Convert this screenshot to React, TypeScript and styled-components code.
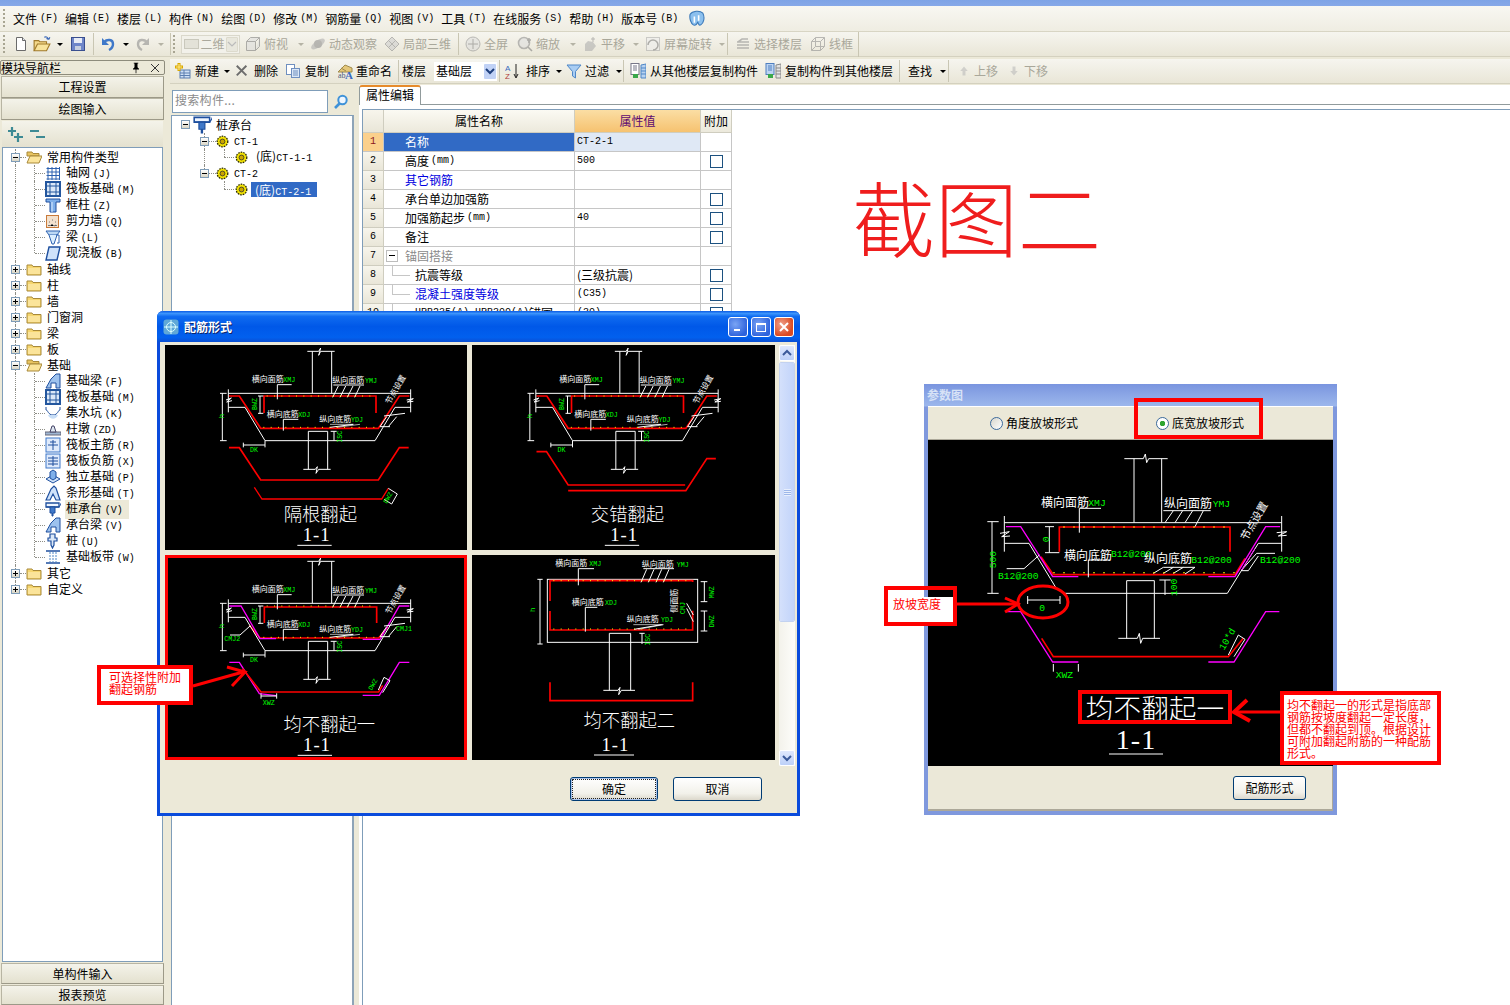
import React from 'react';
import styled, { createGlobalStyle, css } from 'styled-components';

const CJK = `"Noto Sans CJK SC", "Liberation Sans", sans-serif`;
const MONO = `"Liberation Mono", "Noto Sans CJK SC", monospace`;
const SERIF = `"Liberation Serif", "Noto Sans CJK SC", serif`;

const Global = createGlobalStyle`
  html, body { margin: 0; padding: 0; background: #fff; }
  body { font-family: ${CJK}; font-size: 12px; color: #000; }
  * { box-sizing: border-box; }
`;

const Page = styled.div`
  position: relative; width: 1510px; height: 1005px; overflow: hidden; background: #ece9d8;
  display: flex; flex-direction: column; line-height: 16px;
`;
const TitleStrip = styled.div`height: 6px; background: linear-gradient(#7ea3e6, #86a8e8); flex: none;`;
const MenuBar = styled.div`
  height: 25px; flex: none; display: flex; align-items: center; gap: 7px; padding-left: 13px; position: relative;
  background: linear-gradient(#f8f7f2, #efede2);
`;
const Grip = styled.span`
  width: 2px; height: 19px; flex: none;
  background: repeating-linear-gradient(#a8a592 0 2px, transparent 2px 4px);
`;
const MenuGrip = styled(Grip)`position: absolute; left: 3px; top: 3px;`;
const MenuItem = styled.span`display: inline-flex; align-items: center; white-space: nowrap;`;
const LogoItem = styled.span`display: inline-flex; margin-left: 3px;`;
const Lat = styled.span<{ $gap?: number }>`
  font-family: ${MONO}; font-size: 10px; margin-left: ${p => p.$gap ?? 0}px;
`;
const Toolbar1 = styled.div`
  height: 26px; flex: none; display: flex; align-items: center; padding-left: 3px; background: linear-gradient(#f6f5ef, #e9e6d7);
  border-top: 1px solid #d8d5c4; border-bottom: 1px solid #d4d1bf;
`;
const Gap = styled.span<{ $w: number }>`width: ${p => p.$w}px; flex: none;`;
const Body = styled.div`flex: 1; display: flex; min-height: 0;`;
const Sidebar = styled.div`width: 165px; padding-top: 3px; display: flex; flex-direction: column; flex: none;`;
const NavHeader = styled.div`
  height: 15px; flex: none; display: flex; align-items: center; border: 1px solid #8e8c7c; border-radius: 2px; font-size: 12px;
  padding-right: 4px; overflow: hidden; background: #ece9d8;
`;
const NavTitle = styled.span`flex: 1; white-space: nowrap;`;
const NavBtn = styled.div<{ $mt?: number; $h?: number }>`
  height: ${p => p.$h ?? 22}px; flex: none; margin: ${p => p.$mt ?? 0}px 1px 0; display: flex; align-items: center; justify-content: center;
  background: linear-gradient(#f4f3ea, #e4e1cf); border: 1px solid #b8b5a3; border-right-color: #9c9988; border-bottom-color: #9c9988;
`;
const ExpandBar = styled.div`
  height: 26px; flex: none; margin: 1px 2px 0; display: flex; align-items: center; gap: 6px; padding-left: 5px;
  background: linear-gradient(#f4f3ea, #e4e1cf);
`;
const TreeBox = styled.div`
  flex: 1; margin: 0 2px 1px; padding-top: 1px; background: #fff; border: 1px solid #7f9db9; overflow: hidden; min-height: 0;
`;
const Row = styled.div<{ $pad: number; $rowH?: number }>`
  position: relative; height: ${p => p.$rowH ?? 16}px; display: flex; align-items: center; padding-left: ${p => p.$pad}px; white-space: nowrap;
`;
const VGuide = styled.i<{ $x: number; $h?: number }>`
  position: absolute; left: ${p => p.$x}px; top: 0; height: ${p => p.$h ?? 16}px; width: 0; border-left: 1px dotted #8e8e86;
`;
const HGuide = styled.i<{ $x: number; $w: number }>`
  position: absolute; left: ${p => p.$x}px; top: 8px; width: ${p => p.$w}px; height: 0; border-top: 1px dotted #8e8e86;
`;
const Exp = styled.span<{ $open?: boolean; $mr: number }>`
  position: relative; z-index: 1; width: 9px; height: 9px; flex: none; margin-right: ${p => p.$mr}px;
  border: 1px solid #7f9db9; background: linear-gradient(#fff, #d9d5c4);
  &::before { content: ''; position: absolute; left: 1px; top: 3px; width: 5px; height: 1px; background: #000; }
  ${p => !p.$open && css`&::after { content: ''; position: absolute; left: 3px; top: 1px; width: 1px; height: 5px; background: #000; }`}
`;
const Label = styled.span<{ $ml: number; $sel?: boolean; $hi?: boolean }>`
  margin-left: ${p => p.$ml}px;
  ${p => p.$sel && css`background: #316ac5; color: #fff; padding: 0 6px 0 4px; height: 15px; line-height: 15px;`}
  ${p => p.$hi && css`background: #ece9d8; padding: 0 6px 0 1px;`}
`;
const Main = styled.div`flex: 1; display: flex; flex-direction: column; margin-left: 5px; min-width: 0;`;
const Toolbar2 = styled.div`
  height: 25px; flex: none; margin-top: 2px; display: flex; align-items: center; padding-left: 5px;
  background: linear-gradient(#f6f5ef, #e9e6d7); border-bottom: 1px solid #d4d1bf;
`;
const ToolItem = styled.div<{ $w: number; $off?: boolean; $gap?: number }>`
  width: ${p => p.$w}px; flex: none; display: flex; align-items: center; gap: ${p => p.$gap ?? 3}px; white-space: nowrap;
  color: ${p => (p.$off ? '#a9a79a' : '#000')};
  svg { flex: none; ${p => p.$off && 'filter: grayscale(1); opacity: .55;'} }
`;
const Sep = styled.span<{ $w: number; $at?: number }>`
  width: ${p => p.$w}px; height: 22px; flex: none; position: relative;
  &::before { content: ''; position: absolute; left: ${p => p.$at ?? 0}px; top: 0; bottom: 0; width: 1px; background: #c9c6b3; }
`;
const Caret = styled.span<{ $w: number; $off?: boolean }>`
  width: ${p => p.$w}px; flex: none; display: flex; padding-left: 1px;
  &::before { content: ''; border: 3px solid transparent; border-top: 3px solid ${p => (p.$off ? '#b5b3a5' : '#000')}; border-bottom: 0; }
`;
const GroupEnd = styled.span`width: 1px; height: 25px; background: #c9c6b3; flex: none;`;
const Combo = styled.div<{ $w: number; $off?: boolean; $mr: number }>`
  width: ${p => p.$w}px; height: 19px; margin-right: ${p => p.$mr}px; flex: none; display: flex; align-items: center; justify-content: space-between;
  padding: 0 1px 0 2px; background: #fff; font-size: 12px; color: ${p => (p.$off ? '#aaa89c' : '#000')};
  ${p => p.$off && 'border: 1px solid #dad8cb; background: #f2f1ea;'}
`;
const ComboSwatch = styled.span`width: 15px; height: 10px; background: #e3e2d8; border: 1px solid #c9c8bc;`;
const ComboArrow = styled.span<{ $off?: boolean }>`
  width: 12px; height: 15px; background: ${p => (p.$off ? '#e8e7dd' : '#c1d2f6')}; display: flex; align-items: center; justify-content: center; border-radius: 1px;
  ${p => p.$off && 'border: 1px solid #dcdacc;'}
`;
const Content = styled.div`flex: 1; display: flex; min-height: 0;`;
const LeftPane = styled.div`width: 184px; display: flex; flex-direction: column; flex: none;`;
const SearchRow = styled.div`height: 31px; flex: none; padding: 6px 0 2px 2px; display: flex;`;
const SearchInput = styled.div`
  width: 156px; height: 23px; background: #fff; border: 1px solid #7f9db9; color: #8b8b8b; padding-left: 2px; line-height: 17px; letter-spacing: 0.3px;
`;
const SearchBtn = styled.div`width: 26px; display: flex; align-items: center; justify-content: center;`;
const CompTree = styled.div`flex: 1; margin-left: 1px; background: #fff; border: 1px solid #7f9db9; border-bottom: 0; border-right: 2px solid #8ea4b8;`;
const RightPane = styled.div`flex: 1; margin-left: 5px; display: flex; flex-direction: column; min-width: 0; background: #ece9d8;`;
const TabRow = styled.div`height: 20px; flex: none; margin-top: 1px; display: flex; align-items: flex-end; background: #fff;`;
const Tab = styled.div`
  width: 62px; height: 20px; background: #fff; border: 1px solid #919b9c; border-top: 2px solid #e68b2c; border-bottom: 0; border-radius: 3px 3px 0 0; padding-left: 6px; line-height: 16px;
`;
const TabRule = styled.div`flex: 1; height: 1px; background: #919b9c;`;
const Pane = styled.div`flex: 1; background: #fff; padding: 4px 0 0 3px; min-height: 0;`;
const GridBox = styled.div`height: 100%; border: 1px solid #7f9db9; border-right: 0; border-bottom: 0; overflow: hidden;`;
const PropGrid = styled.div`
  display: grid; width: 369px; grid-template-columns: 21px 191px 126px 31px; grid-template-rows: 23px repeat(10, 19px);
`;
const Cell = styled.div<{ $k?: string }>`
  display: flex; align-items: center; border-right: 1px solid #c6c6c6; border-bottom: 1px solid #c6c6c6; padding-left: 2px; white-space: nowrap; position: relative; overflow: hidden;
  ${p => p.$k === 'num' && css`justify-content: center; padding: 0; background: linear-gradient(#f7f5ec, #e9e6d8); border-color: #cfcdbf; font-family: ${MONO}; font-size: 10px;`}
  ${p => p.$k === 'numOn' && css`justify-content: center; padding: 0; background: #fbd08c; color: #8a1520; font-family: ${MONO}; font-size: 10px;`}
  ${p => p.$k === 'head' && css`justify-content: center; padding: 0; background: linear-gradient(#fbfaf3, #ece9dc); border-color: #cfcdbf;`}
  ${p => p.$k === 'headOn' && css`justify-content: center; padding: 0; background: linear-gradient(#fbdea4, #f6c270); color: #5d0a72; border-color: #cfcdbf;`}
  ${p => p.$k === 'on' && css`background: #316ac5; color: #fff; padding-left: 21px;`}
  ${p => p.$k === 'val' && css`background: #dfe8f5;`}
  ${p => p.$k === 'name' && css`padding-left: 21px;`}
  ${p => p.$k === 'link' && css`padding-left: 21px; color: #0000e0;`}
  ${p => p.$k === 'group' && css`padding-left: 21px; color: #8a8a8a;`}
  ${p => p.$k === 'sub' && css`padding-left: 31px;`}
  ${p => p.$k === 'subLink' && css`padding-left: 31px; color: #0000e0;`}
  ${p => p.$k === 'check' && css`justify-content: center; padding: 0;`}
`;
const Check = styled.span`width: 13px; height: 13px; border: 1px solid #1c5180; background: #fff;`;
const GroupBox = styled.span`
  position: absolute; left: 2px; top: 3px; width: 12px; height: 12px; border: 1px solid #bdbdbd; background: #fff;
  &::before { content: ''; position: absolute; left: 2px; top: 4px; width: 6px; height: 1px; background: #000; }
`;
const SubLine = styled.span`
  position: absolute; left: 8px; top: 0; width: 18px; height: 10px; border-left: 1px solid #c6c6c6; border-bottom: 1px solid #c6c6c6;
`;

/* free windows on the desktop */
const Win = styled.div`
  position: absolute; left: 157px; top: 311px; width: 643px; height: 505px; background: #ece9d8; border-radius: 6px 6px 0 0;
  border: 3px solid #0a4bdc; border-top: 0; display: flex; flex-direction: column;
`;
const WinTitle = styled.div`
  height: 31px; flex: none; margin: 0 -3px; padding: 0 6px; display: flex; align-items: center; gap: 5px; border-radius: 6px 6px 0 0; color: #fff; font-weight: 700; text-shadow: 1px 1px 0 #0a246a;
  background: linear-gradient(#0a5be6 0, #3c94fb 8%, #0f6bf0 18%, #0058e8 50%, #0260ee 85%, #0a4fd4 100%);
`;
const WinBtns = styled.div`margin-left: auto; display: flex; gap: 3px;`;
const WinBtn = styled.span<{ $red?: boolean }>`
  width: 20px; height: 20px; border: 1px solid #fff; border-radius: 3px; display: flex; align-items: center; justify-content: center;
  background: ${p => (p.$red ? 'radial-gradient(circle at 35% 35%, #f0a08a, #da4a22 70%)' : 'radial-gradient(circle at 35% 35%, #7aa4f4, #2d62dc 75%)')};
`;
const WinBody = styled.div`flex: 1; display: flex; padding: 3px 1px 0 5px; gap: 4px; min-height: 0;`;
const CellGrid = styled.div`display: grid; grid-template-columns: 302px 303px; grid-auto-rows: 205px; gap: 5px;`;
const DrawCell = styled.div<{ $active?: boolean }>`
  background: #000; position: relative; overflow: hidden;
  svg { display: block; width: 100%; height: 100%; }
  ${p => p.$active && 'outline: 3px solid #f00; outline-offset: -3px;'}
`;
const VScroll = styled.div`
  width: 16px; height: 421px; background: linear-gradient(90deg, #f3f2eb, #fdfdfa); display: flex; flex-direction: column; align-items: stretch;
`;
const ScrollBtn = styled.div`
  height: 16px; background: linear-gradient(#dfe8fd, #bcd0f8); border: 1px solid #fff; border-radius: 2px; display: flex; align-items: center; justify-content: center; flex: none;
`;
const Thumb = styled.div`
  height: 260px; margin-top: 1px; background: linear-gradient(90deg, #d4e0fb, #c2d4fa); border: 1px solid #fff; outline: 1px solid #c3d2f0; outline-offset: -1px; border-radius: 2px; flex: none; display: flex; align-items: center; justify-content: center;
`;
const ThumbMark = styled.span`width: 7px; height: 7px; background: repeating-linear-gradient(#e8effd 0 1px, #9db7ea 1px 2px);`;
const Spacer = styled.div`flex: 1;`;
const WinFoot = styled.div<{ $pr: number; $gap?: number }>`
  display: flex; align-items: center; justify-content: flex-end; gap: ${p => p.$gap ?? 15}px; padding: 0 ${p => p.$pr}px 2px 0; height: 47px; flex: none;
`;
const XpBtn = styled.div<{ $w: number; $def?: boolean }>`
  width: ${p => p.$w}px; height: 24px; border: 1px solid #003c74; border-radius: 3px; background: linear-gradient(#fff, #f2f1ea 70%, #dcd8cc); display: flex; align-items: center; justify-content: center; line-height: 1;
  ${p => p.$def && 'box-shadow: inset 0 0 0 1px #a9c2ea; outline: 1px dotted #222; outline-offset: -3px;'}
`;

const Win2 = styled.div`
  position: absolute; left: 924px; top: 384px; width: 413px; height: 431px; background: linear-gradient(#7a95df, #9cb7ec 22px, #7f98dd 23px); padding: 22px 4px 4px; display: flex; flex-direction: column;
`;
const Win2Title = styled.div`position: absolute; left: 3px; top: 3px; font-weight: 700; color: #d7e2f6; line-height: 16px;`;
const RadioRow = styled.div`
  height: 34px; background: #ebe8d8; display: flex; align-items: center; padding-left: 62px; flex: none; border-top: 1px solid #fff; border-bottom: 1px solid #aca899;
`;
const Radio = styled.label<{ $w: number }>`width: ${p => p.$w}px; display: flex; align-items: center; gap: 3px; white-space: nowrap;`;
const RadioDot = styled.span<{ $on?: boolean }>`
  width: 13px; height: 13px; border-radius: 50%; border: 1px solid #3c6a9c; background: ${p => (p.$on ? 'radial-gradient(circle, #2fa52f 0 2.5px, #fff 3px)' : 'linear-gradient(135deg,#d8d6cc,#fff)')};
`;
const Draw2 = styled.div`height: 326px; background: #000; flex: none; svg { display: block; }`;
const Foot2 = styled.div`flex: 1; background: #ebe8d8; display: flex; align-items: center; justify-content: flex-end; padding-right: 26px; border-right: 1px solid #aca899; border-bottom: 2px solid #aca899;`;

/* red review marks */
const BigTitle = styled.div`
  position: absolute; left: 852px; top: 165px; font-size: 83px; line-height: 100px; font-weight: 300; color: #ef1d1d; white-space: nowrap;
`;
const Frame = styled.div<{ $x: number; $y: number; $w: number; $h: number; $bg?: string; $pad?: string }>`
  position: absolute; left: ${p => p.$x}px; top: ${p => p.$y}px; width: ${p => p.$w}px; height: ${p => p.$h}px;
  border: 4px solid #f00; color: #f00; background: ${p => p.$bg ?? 'transparent'}; padding: ${p => p.$pad ?? '0'}; line-height: 12px; white-space: nowrap;
`;
const Marks = styled.svg`position: absolute; left: 0; top: 0; pointer-events: none;`;
const CadText = styled.text<{ $mono?: boolean; $serif?: boolean; $thin?: boolean }>`
  font-family: ${p => (p.$mono ? MONO : p.$serif ? SERIF : CJK)};
  font-weight: ${p => (p.$thin ? 300 : 400)};
`;

/* ---------- icons ---------- */
const icons: Record<string, React.ReactNode> = {
  new: <><path d="M3.5 1.5h6l3 3v10h-9z" fill="#fff" stroke="#6b6b6b"/><path d="M9.5 1.5v3h3" fill="#dfe4ee" stroke="#6b6b6b"/></>,
  open: <><path d="M1 14V5h4l1 1h6v2" fill="#f4d98a" stroke="#a07a2a"/><path d="M1 14l3-6h11l-3 6z" fill="#f8e39b" stroke="#a07a2a"/><path d="M10 2c2-1 3 0 4 2m0 0l1-2m-1 2l-2-1" stroke="#3a67b8" fill="none"/></>,
  save: <><rect x="1.5" y="1.5" width="13" height="13" fill="#6f86c9" stroke="#3a4f8f"/><rect x="4" y="2" width="8" height="5" fill="#e8ecf5"/><rect x="5" y="10" width="6" height="4" fill="#c7cfdf"/></>,
  undo: <><path d="M4 6c3-3 9-3 9 2 0 3-2 5-4 6" fill="none" stroke="#3f78c9" strokeWidth="2.4"/><path d="M2 2v7h7z" fill="#3f78c9"/></>,
  redo: <><path d="M12 6C9 3 3 3 3 8c0 3 2 5 4 6" fill="none" stroke="#888" strokeWidth="2.4"/><path d="M14 2v7H7z" fill="#888"/></>,
  cube: <path d="M1.5 5.5h9v9h-9zM1.5 5.5l4-4h9l-4 4M10.5 14.5l4-4v-9" fill="#ddd" stroke="#777"/>,
  orbit: <><ellipse cx="8" cy="8" rx="8" ry="3.5" transform="rotate(-35 8 8)" fill="#aaa"/><circle cx="8" cy="8" r="4" fill="#888"/></>,
  zone: <><path d="M8 1l7 7-7 7-7-7z" fill="#ccc" stroke="#888"/><path d="M4 4l8 8M12 4l-8 8" stroke="#888"/></>,
  full: <><circle cx="8" cy="8" r="7" fill="#ddd" stroke="#888"/><path d="M8 3v10M3 8h10" stroke="#777"/></>,
  zoom: <><circle cx="7" cy="7" r="5.5" fill="#ddd" stroke="#888" strokeWidth="1.6"/><path d="M11 11l4 4M12 2v5M10 4h4" stroke="#777" strokeWidth="1.6"/></>,
  pan: <><path d="M3 15V8l3-3 5 1 3 4-4 5z" fill="#aaa"/><path d="M11 1v5M9 3h4" stroke="#888"/></>,
  rotate: <><rect x="1.5" y="1.5" width="13" height="13" fill="#eee" stroke="#aaa"/><path d="M3 9a5 5 0 1 1 5 5" fill="none" stroke="#777" strokeWidth="1.5"/></>,
  layers: <path d="M2 6h12M2 9h12M2 12h12M3 6l4-3h6" fill="none" stroke="#888" strokeWidth="1.6"/>,
  wire: <path d="M1.5 5.5h9v9h-9zM1.5 5.5l4-4h9l-4 4M10.5 14.5l4-4v-9M5.5 1.5v9h9M5.5 10.5l-4 4" fill="none" stroke="#888"/>,
  addNew: <><rect x="5" y="7" width="10" height="8" fill="#cfe0f5" stroke="#5c7fb0"/><path d="M5 10h10M5 12.5h10M9 7v8" stroke="#5c7fb0"/><path d="M4 0v8M0 4h8" stroke="#d9a800" strokeWidth="3"/><path d="M4 1v6M1 4h6" stroke="#ffe680" strokeWidth="1.2"/></>,
  del: <path d="M2 2l11 11M13 2L2 13" stroke="#6d6d6d" strokeWidth="2.2"/>,
  copy: <><rect x="1.5" y="1.5" width="8" height="10" fill="#fff" stroke="#6f8fbf"/><rect x="6.5" y="5.5" width="8" height="9" fill="#dbe7f7" stroke="#6f8fbf"/><path d="M8 8h5M8 10h5M8 12h5" stroke="#6f8fbf"/></>,
  rename: <><path d="M1 9l7-7 7 3v4z" fill="#e4c77a" stroke="#a08a4a"/><path d="M4 5l5 3" stroke="#a08a4a"/><text x="1" y="15" fontSize="8" fill="#4a5a7a" fontFamily="Liberation Serif">ab</text><text x="8" y="15.5" fontSize="11" fontWeight="700" fill="#3a6ac0" fontFamily="Liberation Serif">A</text></>,
  az: <><text x="0" y="7.5" fontSize="8" fontFamily="Liberation Sans" fill="#3a6ac0">A</text><text x="0" y="15.5" fontSize="8" fontFamily="Liberation Sans" fill="#b03a3a">Z</text><path d="M11 1v13M9 11l2 4 2-4" stroke="#222" fill="none"/></>,
  funnel: <path d="M1 2h14L9.5 8.5V15l-3-2V8.5z" fill="#a9cdf3" stroke="#4f87c7"/>,
  cFrom: <><rect x="1" y="0.5" width="8" height="11" fill="#fff" stroke="#778"/><path d="M3 3h4M3 5h4M3 7h4" stroke="#778"/><path d="M11 2l5-1v14h-5zM11 5h5M11 8h5M11 11h5" fill="#b8d2f0" stroke="#4f87c7"/><rect x="3" y="11" width="5" height="4" fill="#3aa84a"/></>,
  cTo: <><rect x="1" y="0.5" width="8" height="11" fill="#bcd4f2" stroke="#4f7fbf"/><path d="M3 3h4M3 5h4M3 7h4" stroke="#4f7fbf"/><path d="M11 2l5-1v14h-5zM11 5h5M11 8h5M11 11h5" fill="#e4e4e4" stroke="#888"/><rect x="3" y="11" width="5" height="4" fill="#3aa84a"/></>,
  up: <path d="M8 2L3 8h3v6h4V8h3z" fill="#b8b8b0"/>,
  down: <path d="M8 14l5-6h-3V2H6v6H3z" fill="#b8b8b0"/>,
  search: <><circle cx="9.5" cy="6" r="4.2" fill="#eef6ff" stroke="#3f92d8" strokeWidth="2"/><path d="M6.5 9.5L2 14" stroke="#3f92d8" strokeWidth="2.6"/></>,
  plus2: <path d="M5 1v9M1 5h8M11 7v9M7 11h9" stroke="#3d8a94" strokeWidth="2.2" fill="none"/>,
  minus2: <path d="M1 5h9M7 11h9" stroke="#3d8a94" strokeWidth="2.2" fill="none"/>,
  folder: <><path d="M1 4h5l1 1.5h8V14H1z" fill="#f6d66f" stroke="#a8893a"/><path d="M2 7h12v6H2z" fill="#fbe49a"/></>,
  folderOpen: <><path d="M1 3h5l1 1.5h6V7H1z" fill="#e8c460" stroke="#a8893a"/><path d="M1 14l3-7h12l-3 7z" fill="#fbe49a" stroke="#a8893a"/></>,
  axis: <path d="M1.5 3.5h13M1.5 7h13M1.5 10.5h13M1.5 14h13M3 2v13M7 2v13M11 2v13M14.5 2v13" stroke="#2e62b0" fill="none"/>,
  raft: <><rect x="1" y="1" width="14" height="14" fill="#dbe8f8" stroke="#23569e" strokeWidth="2"/><path d="M1 5h14M1 11h14M5 1v14M11 1v14" stroke="#23569e"/></>,
  col: <><path d="M1 2h14v3H11v10H5V5H1z" fill="#7fb0ea" stroke="#1e4f9e"/><path d="M7 5v10" stroke="#dcecff"/></>,
  wall: <><rect x="1.5" y="2.5" width="12" height="12" fill="#f3e1cd" stroke="#c97a3a"/><path d="M3 13l1-1 1 1 2-2 2 2 2-1 1 1M4 9h1M7 7h1M10 9h1" stroke="#777"/></>,
  beam: <><path d="M1 2h14l-3 4H4z" fill="#bcd8f4" stroke="#2e62b0"/><path d="M4 6l3 9h2l3-9" fill="#dbeeff" stroke="#2e62b0"/><path d="M11 6h3v8h-2" fill="none" stroke="#2e62b0"/></>,
  slab: <path d="M4 2h11l-3 13H1z" fill="#cfe2fa" stroke="#1e4f9e" strokeWidth="1.4"/>,
  fbeam: <path d="M1 15l5-9 5-5h4v14h-4v-5H6v5z" fill="#9dc2ee" stroke="#1e4f9e"/>,
  pit: <><path d="M1 2v3c2 0 2 5 7 5s5-5 7-5V2" fill="none" stroke="#1e4f9e"/><path d="M3 10c2 5 8 5 10 0z" fill="#c7ddf6"/></>,
  pier: <><rect x="0" y="11" width="16" height="3" fill="#9fb7d4" stroke="#667"/><path d="M5 11l2-6h2l2 6z" fill="#dde6f0" stroke="#446"/></>,
  rMain: <><rect x="1" y="1" width="14" height="14" fill="#dfeafb" stroke="#3f78c9"/><path d="M8 3v10M3 8h10M5 5h6" stroke="#1e4f9e"/></>,
  rNeg: <><rect x="1" y="1" width="14" height="14" fill="#dfeafb" stroke="#3f78c9"/><path d="M8 3v10M3 8h10M3 5h10M3 11h10" stroke="#1e4f9e"/></>,
  iso: <><path d="M1 10l7-4 7 4-7 4z" fill="#cfe2fa" stroke="#1e4f9e"/><path d="M5 9V3l3-2 3 2v6l-3 2z" fill="#7fb0ea" stroke="#1e4f9e"/></>,
  strip: <path d="M1 15l5-11 3-3 2 2 4 12h-4L8 9l-3 6z" fill="#cfe2fa" stroke="#1e4f9e" strokeWidth="1.2"/>,
  cap: <><path d="M1 2h13v4H1z" fill="#eef5ff" stroke="#1e4f9e" strokeWidth="1.3"/><path d="M1 6h13l2-3v-1" fill="none" stroke="#1e4f9e"/><path d="M5 6h5v6H8v3H7v-3H5z" fill="#3f78c9" stroke="#1e4f9e"/></>,
  pile: <path d="M5 1h5v4h2v3H9v4l-1.5 3L6 12V8H3V5h2z" fill="#dbe8f8" stroke="#1e4f9e" strokeWidth="1.2"/>,
  band: <><path d="M1 2h14M1 14h14" stroke="#1e4f9e" strokeWidth="1.4"/><path d="M5 3v10M8 3v10M11 3v10" stroke="#4f87c7" strokeDasharray="2 1"/></>,
  gear: <><circle cx="8" cy="8" r="6.5" fill="#f3e300" stroke="#2a2a00" strokeDasharray="2 1.2" strokeWidth="1.6"/><circle cx="8" cy="8" r="3" fill="#c9a400" stroke="#333"/></>,
  logo: <><path d="M2 4c2-3 9-4 12-1 2 4 1 9-2 11-2 1-2-1-3-3 0 2-2 4-4 3C3 13 1 8 2 4z" fill="#8cc0ee" stroke="#3a78b8"/><path d="M6 6v6M10 5v5" stroke="#fff" strokeWidth="1.5"/></>,
  winIcon: <><rect x="0.5" y="0.5" width="15" height="15" rx="3" fill="#5fa8d8"/><circle cx="8" cy="8" r="4.5" fill="none" stroke="#dff"/><path d="M8 1v14M1 8h14" stroke="#dff"/></>,
  pin: <path d="M5 1h6v1H10v5l2 2v1H8.5v5h-1v-5H4V9l2-2V2H5z" fill="#000"/>,
};
const Ico: React.FC<{ n: string; s?: number }> = ({ n, s = 16 }) => (
  <svg width={s} height={s} viewBox="0 0 16 16">{icons[n]}</svg>
);
const Small: React.FC<{ d: string; c?: string; w?: number }> = ({ d, c = '#000', w = 1.2 }) => (
  <svg width="10" height="10" viewBox="0 0 10 10"><path d={d} stroke={c} strokeWidth={w} fill="none" /></svg>
);

/* ---------- cad helpers (coordinates in 3x reference units) ---------- */
const P: React.FC<{ p: string; c?: string; w?: number }> = ({ p, c = '#fff', w = 3 }) => (
  <polyline points={p} fill="none" stroke={c} strokeWidth={w} />
);
const T: React.FC<{ x: number; y: number; s?: number; c?: string; r?: number; mono?: boolean; serif?: boolean; thin?: boolean; a?: 'middle'; ls?: number; children: React.ReactNode }> =
  ({ x, y, s = 24, c = '#fff', r, mono, serif, thin, a, ls, children }) => (
    <CadText x={x} y={y} fontSize={s} fill={c} $mono={mono} $serif={serif} $thin={thin} textAnchor={a} letterSpacing={ls}
      transform={r ? `rotate(${r} ${x} ${y})` : undefined}>{children}</CadText>
  );
const G = '#00ff00';
const R = '#ff0000';
const M = '#ff00ff';
const Dots: React.FC<{ x0: number; x1: number; y: number; step?: number; s?: number }> = ({ x0, x1, y, step = 22, s = 3 }) => {
  const out: React.ReactNode[] = [];
  for (let x = x0; x <= x1; x += step) out.push(<rect key={x} x={x} y={y - s / 2} width={s} height={s} fill="#ffff00" />);
  return <>{out}</>;
};

const SlopeBase: React.FC = () => (
  <>
    <P p="442,124 476,124 482,114 476,136 482,124 524,124" />
    <P p="457,124 457,250" /><P p="515,124 515,250" />
    <P p="205,250 752,250" /><P p="205,238 205,307" /><P p="752,238 752,307" />
    <P p="198,270 214,264 200,276 216,272" /><P p="740,270 760,266 742,276 760,274" />
    <P p="205,292 255,292 315,392 645,392 705,292 752,292" />
    <P p="187,250 187,392" /><P p="180,250 200,250" /><P p="180,392 200,392" />
    <P p="445,392 445,364 503,364 503,392" />
    <P p="445,392 445,478" /><P p="503,392 503,478" />
    <P p="430,478 466,478 472,470 468,490 476,478 512,478" />
    <P p="250,405 315,405" /><P p="250,398 250,412" /><P p="315,392 315,412" />
    <P p="300,258 300,310" /><P p="294,258 310,258" /><P p="294,310 310,310" />
    <P p="522,364 522,392" /><P p="512,364 530,364" />
    <P p="352,268 352,224 395,224" /><P p="370,362 370,328 415,328" />
    <P p="520,225 612,225" />
    <P p="518,262 535,228" /><P p="540,262 557,228" /><P p="562,262 579,228" /><P p="584,262 600,228" />
    <P p="510,352 580,343" /><P p="530,352 600,343" w={2} /><P p="510,343 580,343" w={2} />
    <P p="672,318 735,310" /><P p="660,350 680,320" /><P p="685,350 710,320" /><P p="660,350 690,350" />
    <T x={275} y={217}>横向面筋</T><T x={370} y={216} s={20} c={G} mono>XMJ</T>
    <T x={517} y={220}>纵向面筋</T><T x={615} y={219} s={20} c={G} mono>YMJ</T>
    <T x={320} y={322}>横向底筋</T><T x={415} y={322} s={20} c={G} mono>XDJ</T>
    <T x={478} y={336}>纵向底筋</T><T x={573} y={336} s={20} c={G} mono>YDJ</T>
    <T x={690} y={284} r={-60}>节点设置</T>
    <T x={290} y={300} s={20} c={G} r={-90} mono>BWZ</T>
    <T x={545} y={398} s={20} c={G} r={-90} mono>ISC</T>
    <T x={193} y={325} s={22} c={G} r={-90} mono>h</T>
    <T x={270} y={427} s={20} c={G} mono>DK</T>
    <Dots x0={320} x1={640} y={258} /><Dots x0={310} x1={650} y={352} />
  </>
);
const Caption: React.FC<{ t: string; cx: number; ty?: number; ny?: number; uy?: number; ux?: [number, number]; nx?: number }> =
  ({ t, cx, ty = 634, ny = 694, uy = 706, ux = [412, 515], nx = 470 }) => (
    <>
      <T x={cx} y={ty} s={55} a="middle" thin>{t}</T>
      <T x={nx} y={ny} s={56} a="middle" serif ls={3}>1-1</T>
      <P p={`${ux[0]},${uy} ${ux[1]},${uy}`} />
    </>
  );
const UpperRed: React.FC = () => (
  <>
    <P p="207,258 238,258 302,355 655,355 718,258 748,258" c={R} w={5} />
    <P p="312,309 312,258 648,258 648,309" c={R} w={5} />
  </>
);
const Svg: React.FC<{ vb?: string; children: React.ReactNode }> = ({ vb = '15 105 906 615', children }) => (
  <svg viewBox={vb}>{children}</svg>
);

const CellOne = () => (
  <DrawCell><Svg>
    <UpperRed /><SlopeBase />
    <P p="207,413 238,413 302,510 655,510 718,413 746,413" c={R} w={5} />
    <P p="283,532 306,567 665,567 685,535" c={R} w={4} />
    <P p="685,535 712,552 695,582 672,568" />
    <T x={680} y={582} s={20} c={G} r={-60} mono>DWZ</T>
    <Caption t="隔根翻起" cx={481} />
  </Svg></DrawCell>
);
const CellTwo = () => (
  <DrawCell><Svg>
    <UpperRed /><SlopeBase />
    <P p="207,425 237,425 302,525 653,525" c={R} w={5} />
    <P p="302,542 655,542 718,446 745,446" c={R} w={5} />
    <Caption t="交错翻起" cx={480} ty={633} ny={694} />
  </Svg></DrawCell>
);
const CellThree = () => (
  <DrawCell $active><Svg>
    <P p="313,309 313,261 650,261 650,309" c={R} w={5} />
    <P p="268,316 300,354 656,354 683,321" c={R} w={5} />
    <P p="208,258 243,258 300,356 348,356" c={M} w={4} />
    <P p="608,358 660,358 718,258 748,258" c={M} w={4} />
    <SlopeBase />
    <P p="210,345 240,345 270,318" />
    <P p="208,427 238,427 298,521 348,527" c={M} w={4} />
    <P p="608,526 658,526 718,427 748,427" c={M} w={4} />
    <P p="248,446 303,516 656,516 668,496" c={R} w={5} />
    <P p="303,528 350,528" /><P p="303,520 303,536" /><P p="350,520 350,536" />
    <P p="655,510 672,472 690,482 668,518" />
    <T x={193} y={364} s={20} c={G} mono>CMJ2</T>
    <T x={708} y={332} s={20} c={G} mono>CMJ1</T>
    <T x={308} y={556} s={20} c={G} mono>XWZ</T>
    <T x={635} y={512} s={20} c={G} r={-60} mono>DWZ</T>
    <Caption t="均不翻起一" cx={508} ty={632} ny={694} uy={706} ux={[413, 516]} nx={471} />
  </Svg></DrawCell>
);
const CellFour = () => (
  <DrawCell><Svg vb="6 15 909 615">
    <rect x={232} y={88} width={451} height={189} fill="none" stroke="#fff" strokeWidth={3} />
    <P p="240,153 240,92 668,92 668,96" c={R} w={5} />
    <P p="240,183 240,240 668,240 668,182" c={R} w={5} />
    <P p="240,397 240,452 668,452 668,397" c={R} w={5} />
    <P p="418,421 418,250 482,250 482,421" />
    <P p="400,421 444,421 450,412 446,434 454,421 495,421" />
    <P p="210,88 210,282" /><P p="202,88 218,88" /><P p="202,282 218,282" />
    <P p="703,95 703,155" /><P p="692,95 712,95" /><P p="692,155 712,155" />
    <P p="703,183 703,243" /><P p="692,183 712,183" /><P p="692,243 712,243" />
    <P p="325,106 325,56 372,56" /><P p="346,245 346,172 382,172" />
    <P p="520,56 612,56" /><P p="513,97 530,58" /><P p="535,97 552,58" /><P p="558,97 575,58" /><P p="580,97 597,58" />
    <P p="492,238 575,224" /><P p="505,238 580,224" w={2} /><P p="490,224 580,224" w={2} />
    <P p="650,160 670,195" /><P p="650,175 670,215" />
    <P p="516,250 516,282" /><P p="508,250 524,250" />
    <T x={256} y={48}>横向面筋</T><T x={358} y={47} s={20} c={G} mono>XMJ</T>
    <T x={515} y={50}>纵向面筋</T><T x={620} y={50} s={20} c={G} mono>YMJ</T>
    <T x={305} y={164}>横向底筋</T><T x={405} y={164} s={20} c={G} mono>XDJ</T>
    <T x={470} y={216}>纵向底筋</T><T x={573} y={216} s={20} c={G} mono>YDJ</T>
    <T x={620} y={188} r={-90}>侧面筋</T>
    <T x={645} y={192} s={20} c={G} r={-90} mono>CMJ</T>
    <T x={733} y={145} s={20} c={G} r={-90} mono>MWZ</T>
    <T x={733} y={232} s={20} c={G} r={-90} mono>DWZ</T>
    <T x={196} y={186} s={22} c={G} r={-90} mono>h</T>
    <T x={540} y={287} s={20} c={G} r={-90} mono>ISC</T>
    <Dots x0={250} x1={660} y={92} step={22} /><Dots x0={250} x1={660} y={237} step={22} />
    <T x={478} y={530} s={55} a="middle" thin>均不翻起二</T>
    <T x={436} y={603} s={56} a="middle" serif ls={3}>1-1</T>
    <P p="372,615 492,615" />
  </Svg></DrawCell>
);

const ParamDrawing = () => (
  <svg width="405" height="326" viewBox="144 180 1215 978">
    <P p="538,515 538,441 1050,441 1050,515" c={R} w={5} />
    <P p="483,530 520,584 1065,584 1095,535" c={R} w={5} />
    <P p="378,440 422,440 518,590 595,590" c={M} w={4} />
    <P p="985,590 1065,590 1157,440 1200,440" c={M} w={4} />
    <P p="733,236 790,236 796,222 800,248 806,236 863,236" />
    <P p="762,236 762,428" /><P p="845,236 845,428" />
    <P p="373,428 1205,428" /><P p="373,408 373,515" /><P p="1205,408 1205,515" />
    <P p="360,460 388,455 365,470 390,468" /><P p="1190,458 1220,455 1195,468 1220,466" />
    <P p="373,490 447,490 527,622" /><P p="555,640 1042,640 1135,490 1205,490" />
    <P p="336,425 336,640" /><P p="322,425 356,425" /><P p="322,640 356,640" />
    <P p="740,640 740,602 823,602 823,640" /><P p="740,640 740,775" /><P p="823,640 823,775" />
    <P p="715,775 772,775 778,760 782,790 788,775 840,775" />
    <P p="598,458 598,385 663,385" /><P p="625,592 625,540 690,540" />
    <P p="850,392 992,392" /><P p="855,428 880,392" /><P p="885,428 908,392" /><P p="915,428 938,392" /><P p="945,440 970,392" />
    <P p="820,580 850,562 945,562 915,582" /><P p="850,580 880,562" /><P p="880,580 910,562" />
    <P p="380,566 432,566 478,525" />
    <P p="1085,570 1130,520 1185,520" /><P p="1085,572 1105,572 1135,528" />
    <P p="508,440 508,518" /><P p="495,440 522,440" /><P p="495,518 538,518" />
    <P p="855,600 855,645" /><P p="838,600 872,600" />
    <P p="443,660 540,660" /><P p="443,648 443,672" /><P p="540,648 540,672" />
    <T x={483} y={382} s={36}>横向面筋</T><T x={625} y={378} s={29} c={G} mono>XMJ</T>
    <T x={852} y={385} s={36}>纵向面筋</T><T x={998} y={382} s={29} c={G} mono>YMJ</T>
    <T x={552} y={540} s={36}>横向底筋</T><T x={693} y={530} s={29} c={G} mono>B12@200</T>
    <T x={792} y={550} s={36}>纵向底筋</T><T x={934} y={548} s={29} c={G} mono>B12@200</T>
    <T x={1140} y={548} s={29} c={G} mono>B12@200</T>
    <T x={354} y={598} s={29} c={G} mono>B12@200</T>
    <T x={1100} y={484} s={32} r={-60}>节点设置</T>
    <T x={348} y={565} s={29} c={G} r={-90} mono>500</T>
    <T x={506} y={487} s={29} c={G} r={-90} mono>0</T>
    <T x={478} y={692} s={29} c={G} mono>0</T>
    <T x={892} y={648} s={29} c={G} r={-90} mono>100</T>
    <Dots x0={550} x1={1040} y={441} step={30} s={4} /><Dots x0={520} x1={1060} y={578} step={30} s={4} />
    <P p="1085,570 1125,505" c={M} w={3} />
    <P p="378,695 422,695 518,846 595,846" c={M} w={4} />
    <P p="985,846 1062,846 1157,695 1198,695" c={M} w={4} />
    <P p="485,775 520,830 1045,830 1090,775" c={R} w={5} />
    <P p="1045,825 1075,765 1095,778 1062,830" />
    <T x={1032} y={812} s={29} c={G} r={-60} mono>10*d</T>
    <P p="520,852 520,875" /><P p="595,852 595,875" />
    <T x={527} y={895} s={29} c={G} mono>XWZ</T>
    <T x={825} y={1016} s={83} a="middle" thin>均不翻起一</T>
    <T x={768} y={1107} s={84} a="middle" serif ls={3}>1-1</T>
    <P p="687,1122 849,1122" />
  </svg>
);

/* ---------- data ---------- */
const Menus: [string, string][] = [['文件','(F)'],['编辑','(E)'],['楼层','(L)'],['构件','(N)'],['绘图','(D)'],['修改','(M)'],['钢筋量','(Q)'],['视图','(V)'],['工具','(T)'],['在线服务','(S)'],['帮助','(H)'],['版本号','(B)']];
type NavRow = { t: string; k?: string; i: string; d: 0 | 1; open?: boolean; last?: boolean; hi?: boolean };
const nav: NavRow[] = [
  { t: '常用构件类型', i: 'folderOpen', d: 0, open: true },
  { t: '轴网', k: '(J)', i: 'axis', d: 1 }, { t: '筏板基础', k: '(M)', i: 'raft', d: 1 }, { t: '框柱', k: '(Z)', i: 'col', d: 1 },
  { t: '剪力墙', k: '(Q)', i: 'wall', d: 1 }, { t: '梁', k: '(L)', i: 'beam', d: 1 }, { t: '现浇板', k: '(B)', i: 'slab', d: 1, last: true },
  { t: '轴线', i: 'folder', d: 0 }, { t: '柱', i: 'folder', d: 0 }, { t: '墙', i: 'folder', d: 0 }, { t: '门窗洞', i: 'folder', d: 0 }, { t: '梁', i: 'folder', d: 0 }, { t: '板', i: 'folder', d: 0 },
  { t: '基础', i: 'folderOpen', d: 0, open: true },
  { t: '基础梁', k: '(F)', i: 'fbeam', d: 1 }, { t: '筏板基础', k: '(M)', i: 'raft', d: 1 }, { t: '集水坑', k: '(K)', i: 'pit', d: 1 }, { t: '柱墩', k: '(ZD)', i: 'pier', d: 1 },
  { t: '筏板主筋', k: '(R)', i: 'rMain', d: 1 }, { t: '筏板负筋', k: '(X)', i: 'rNeg', d: 1 }, { t: '独立基础', k: '(P)', i: 'iso', d: 1 }, { t: '条形基础', k: '(T)', i: 'strip', d: 1 },
  { t: '桩承台', k: '(V)', i: 'cap', d: 1, hi: true }, { t: '承台梁', k: '(V)', i: 'fbeam', d: 1 }, { t: '桩', k: '(U)', i: 'pile', d: 1 }, { t: '基础板带', k: '(W)', i: 'band', d: 1, last: true },
  { t: '其它', i: 'folder', d: 0 }, { t: '自定义', i: 'folder', d: 0, last: true },
];

const NavTree = () => (
  <TreeBox>
    {nav.map((r, i) => r.d === 0 ? (
      <Row key={i} $pad={8}>
        <VGuide $x={12} $h={r.last ? 8 : 16} />
        <HGuide $x={17} $w={6} />
        <Exp $open={r.open} $mr={6} /><Ico n={r.i} /><Label $ml={5}>{r.t}</Label>
      </Row>
    ) : (
      <Row key={i} $pad={42}>
        <VGuide $x={12} />
        <VGuide $x={31} $h={r.last ? 8 : 16} />
        <HGuide $x={32} $w={10} />
        <Ico n={r.i} /><Label $ml={r.hi ? 4 : 5} $hi={r.hi}>{r.t} <Lat>{r.k}</Lat></Label>
      </Row>
    ))}
  </TreeBox>
);

const CompRows = () => (
  <CompTree>
    <Row $pad={9} $rowH={17}><Exp $open $mr={3} /><Ico n="cap" s={19} /><Label $ml={4}>桩承台</Label></Row>
    <Row $pad={28}><VGuide $x={32} /><HGuide $x={37} $w={7} /><Exp $open $mr={7} /><Ico n="gear" s={13} /><Label $ml={5}><Lat>CT-1</Lat></Label></Row>
    <Row $pad={63}><VGuide $x={32} /><VGuide $x={52} $h={8} /><HGuide $x={52} $w={10} /><Ico n="gear" s={13} /><Label $ml={8}>(底)<Lat>CT-1-1</Lat></Label></Row>
    <Row $pad={28}><VGuide $x={32} $h={8} /><HGuide $x={37} $w={7} /><Exp $open $mr={7} /><Ico n="gear" s={13} /><Label $ml={5}><Lat>CT-2</Lat></Label></Row>
    <Row $pad={63}><VGuide $x={52} $h={8} /><HGuide $x={52} $w={10} /><Ico n="gear" s={13} /><Label $ml={3} $sel>(底)<Lat>CT-2-1</Lat></Label></Row>
  </CompTree>
);

const Props = () => (
  <PropGrid>
    <Cell $k="num" /><Cell $k="head">属性名称</Cell><Cell $k="headOn">属性值</Cell><Cell $k="head">附加</Cell>
    <Cell $k="numOn">1</Cell><Cell $k="on">名称</Cell><Cell $k="val"><Lat>CT-2-1</Lat></Cell><Cell />
    <Cell $k="num">2</Cell><Cell $k="name">高度<Lat $gap={2}>(mm)</Lat></Cell><Cell><Lat>500</Lat></Cell><Cell $k="check"><Check /></Cell>
    <Cell $k="num">3</Cell><Cell $k="link">其它钢筋</Cell><Cell /><Cell />
    <Cell $k="num">4</Cell><Cell $k="name">承台单边加强筋</Cell><Cell /><Cell $k="check"><Check /></Cell>
    <Cell $k="num">5</Cell><Cell $k="name">加强筋起步<Lat $gap={2}>(mm)</Lat></Cell><Cell><Lat>40</Lat></Cell><Cell $k="check"><Check /></Cell>
    <Cell $k="num">6</Cell><Cell $k="name">备注</Cell><Cell /><Cell $k="check"><Check /></Cell>
    <Cell $k="num">7</Cell><Cell $k="group"><GroupBox />锚固搭接</Cell><Cell /><Cell />
    <Cell $k="num">8</Cell><Cell $k="sub"><SubLine />抗震等级</Cell><Cell>(三级抗震)</Cell><Cell $k="check"><Check /></Cell>
    <Cell $k="num">9</Cell><Cell $k="subLink"><SubLine />混凝土强度等级</Cell><Cell><Lat>(C35)</Lat></Cell><Cell $k="check"><Check /></Cell>
    <Cell $k="num">10</Cell><Cell $k="sub"><SubLine /><Lat>HPB235(A),HPB300(A)</Lat>锚固</Cell><Cell><Lat>(30)</Lat></Cell><Cell $k="check"><Check /></Cell>
  </PropGrid>
);

export default function App() {
  return (
    <Page>
      <Global />
      <TitleStrip />
      <MenuBar>
        <MenuGrip />
        {Menus.map(([a, b]) => <MenuItem key={a}>{a}<Lat $gap={3}>{b}</Lat></MenuItem>)}
        <LogoItem><Ico n="logo" s={17} /></LogoItem>
      </MenuBar>
      <Toolbar1>
        <Grip /><Gap $w={8} />
        <ToolItem $w={20}><Ico n="new" /></ToolItem>
        <ToolItem $w={23}><Ico n="open" s={18} /></ToolItem>
        <Caret $w={14} />
        <ToolItem $w={23}><Ico n="save" /></ToolItem>
        <Sep $w={7} />
        <ToolItem $w={22}><Ico n="undo" /></ToolItem>
        <Caret $w={13} />
        <ToolItem $w={22} $off><Ico n="redo" /></ToolItem>
        <Caret $w={13} $off />
        <Sep $w={3} />
        <Grip /><Gap $w={6} />
        <Combo $w={59} $off $mr={5}><ComboSwatch />二维<ComboArrow $off><Small d="M1 3l4 4 4-4" c="#bbb" /></ComboArrow></Combo>
        <ToolItem $w={52} $off><Ico n="cube" />俯视</ToolItem><Caret $w={13} $off />
        <ToolItem $w={74} $off><Ico n="orbit" />动态观察</ToolItem>
        <ToolItem $w={74} $off><Ico n="zone" />局部三维</ToolItem>
        <Sep $w={7} />
        <ToolItem $w={52} $off><Ico n="full" />全屏</ToolItem>
        <ToolItem $w={52} $off><Ico n="zoom" />缩放</ToolItem><Caret $w={13} $off />
        <ToolItem $w={50} $off><Ico n="pan" />平移</ToolItem><Caret $w={13} $off />
        <ToolItem $w={73} $off><Ico n="rotate" />屏幕旋转</ToolItem><Caret $w={9} $off />
        <Sep $w={8} />
        <ToolItem $w={75} $off><Ico n="layers" />选择楼层</ToolItem>
        <ToolItem $w={48} $off><Ico n="wire" />线框</ToolItem>
        <GroupEnd />
      </Toolbar1>
      <Body>
        <Sidebar>
          <NavHeader>
            <NavTitle>模块导航栏</NavTitle>
            <Ico n="pin" s={12} /><Gap $w={8} /><Small d="M1 1l8 8M9 1l-8 8" c="#333" w={1} />
          </NavHeader>
          <NavBtn $mt={1}>工程设置</NavBtn>
          <NavBtn $mt={0}>绘图输入</NavBtn>
          <ExpandBar><Ico n="plus2" /><Ico n="minus2" /></ExpandBar>
          <NavTree />
          <NavBtn $h={21}>单构件输入</NavBtn>
          <NavBtn $mt={1} $h={20}>报表预览</NavBtn>
        </Sidebar>
        <Main>
          <Toolbar2>
            <ToolItem $w={48} $gap={4}><Ico n="addNew" />新建</ToolItem><Caret $w={12} />
            <ToolItem $w={50} $gap={5}><Ico n="del" s={14} />删除</ToolItem>
            <ToolItem $w={52} $gap={4}><Ico n="copy" />复制</ToolItem>
            <ToolItem $w={61} $gap={3}><Ico n="rename" />重命名</ToolItem>
            <Sep $w={4} />
            <ToolItem $w={32}>楼层</ToolItem>
            <Combo $w={63} $mr={2}>基础层<ComboArrow><Small d="M1 3l4 4 4-4" c="#1e3f7e" w={2} /></ComboArrow></Combo>
            <Sep $w={6} />
            <ToolItem $w={50} $gap={5}><Ico n="az" />排序</ToolItem><Caret $w={11} />
            <ToolItem $w={49} $gap={3}><Ico n="funnel" />过滤</ToolItem><Caret $w={8} />
            <Sep $w={7} />
            <ToolItem $w={135} $gap={4}><Ico n="cFrom" />从其他楼层复制构件</ToolItem>
            <ToolItem $w={134} $gap={4}><Ico n="cTo" />复制构件到其他楼层</ToolItem>
            <Sep $w={9} />
            <ToolItem $w={31}>查找</ToolItem><Caret $w={9} />
            <Sep $w={10} />
            <ToolItem $w={50} $off $gap={4}><Ico n="up" s={12} />上移</ToolItem>
            <ToolItem $w={50} $off $gap={4}><Ico n="down" s={12} />下移</ToolItem>
          </Toolbar2>
          <Content>
            <LeftPane>
              <SearchRow>
                <SearchInput>搜索构件...</SearchInput>
                <SearchBtn><Ico n="search" /></SearchBtn>
              </SearchRow>
              <CompRows />
            </LeftPane>
            <RightPane>
              <TabRow><Tab>属性编辑</Tab><TabRule /></TabRow>
              <Pane><GridBox><Props /></GridBox></Pane>
            </RightPane>
          </Content>
        </Main>
      </Body>

      <BigTitle>截图二</BigTitle>

      <Win>
        <WinTitle>
          <Ico n="winIcon" />配筋形式
          <WinBtns>
            <WinBtn><svg width="12" height="12"><rect x="2" y="8" width="6" height="2" fill="#fff" /></svg></WinBtn>
            <WinBtn><svg width="12" height="12"><rect x="1.5" y="2.5" width="9" height="8" fill="none" stroke="#fff" /><rect x="1" y="2" width="10" height="2" fill="#fff" /></svg></WinBtn>
            <WinBtn $red><svg width="12" height="12"><path d="M2 2l8 8M10 2l-8 8" stroke="#fff" strokeWidth="2" /></svg></WinBtn>
          </WinBtns>
        </WinTitle>
        <WinBody>
          <CellGrid>
            <CellOne /><CellTwo /><CellThree /><CellFour />
          </CellGrid>
          <VScroll>
            <ScrollBtn><Small d="M1 7l4-4 4 4" c="#3b5a9a" w={2} /></ScrollBtn>
            <Thumb><ThumbMark /></Thumb>
            <Spacer />
            <ScrollBtn><Small d="M1 3l4 4 4-4" c="#3b5a9a" w={2} /></ScrollBtn>
          </VScroll>
        </WinBody>
        <WinFoot $pr={35}>
          <XpBtn $w={88} $def>确定</XpBtn>
          <XpBtn $w={89}>取消</XpBtn>
        </WinFoot>
      </Win>

      <Win2>
        <Win2Title>参数图</Win2Title>
        <RadioRow>
          <Radio $w={166}><RadioDot />角度放坡形式</Radio>
          <Radio $w={100}><RadioDot $on />底宽放坡形式</Radio>
        </RadioRow>
        <Draw2><ParamDrawing /></Draw2>
        <Foot2><XpBtn $w={73}>配筋形式</XpBtn></Foot2>
      </Win2>

      <Marks width="1510" height="1005" viewBox="0 0 1510 1005">
        <polyline points="193,686 243,672" stroke="#f00" strokeWidth="3" fill="none" />
        <polyline points="227,667 245,672 232,686" stroke="#f00" strokeWidth="3" fill="none" />
        <line x1={957} y1={604} x2={1016} y2={604} stroke="#f00" strokeWidth="3" />
        <polyline points="1005,598 1018,604 1005,612" stroke="#f00" strokeWidth="3" fill="none" />
        <ellipse cx={1043} cy={602} rx={25} ry={16} stroke="#f00" strokeWidth="3" fill="none" />
        <line x1={1280} y1={712} x2={1236} y2={712} stroke="#f00" strokeWidth="3" />
        <polyline points="1247,700 1234,712 1250,721" stroke="#f00" strokeWidth="4" fill="none" />
      </Marks>
      <Frame $x={97} $y={665} $w={96} $h={40} $bg="#fff" $pad="2px 0 0 8px">可选择性附加<br />翻起钢筋</Frame>
      <Frame $x={884} $y={586} $w={73} $h={40} $bg="linear-gradient(transparent 7px, #fff 7px)" $pad="8px 0 0 5px">放坡宽度</Frame>
      <Frame $x={1134} $y={398} $w={129} $h={41} />
      <Frame $x={1078} $y={690} $w={154} $h={34} />
      <Frame $x={1280} $y={691} $w={161} $h={74} $bg="#fff" $pad="4px 0 0 3px">
        均不翻起一的形式是指底部<br />钢筋按坡度翻起一定长度，<br />但都不翻起到顶。根据设计<br />可附加翻起附筋的一种配筋<br />形式。
      </Frame>
    </Page>
  );
}
